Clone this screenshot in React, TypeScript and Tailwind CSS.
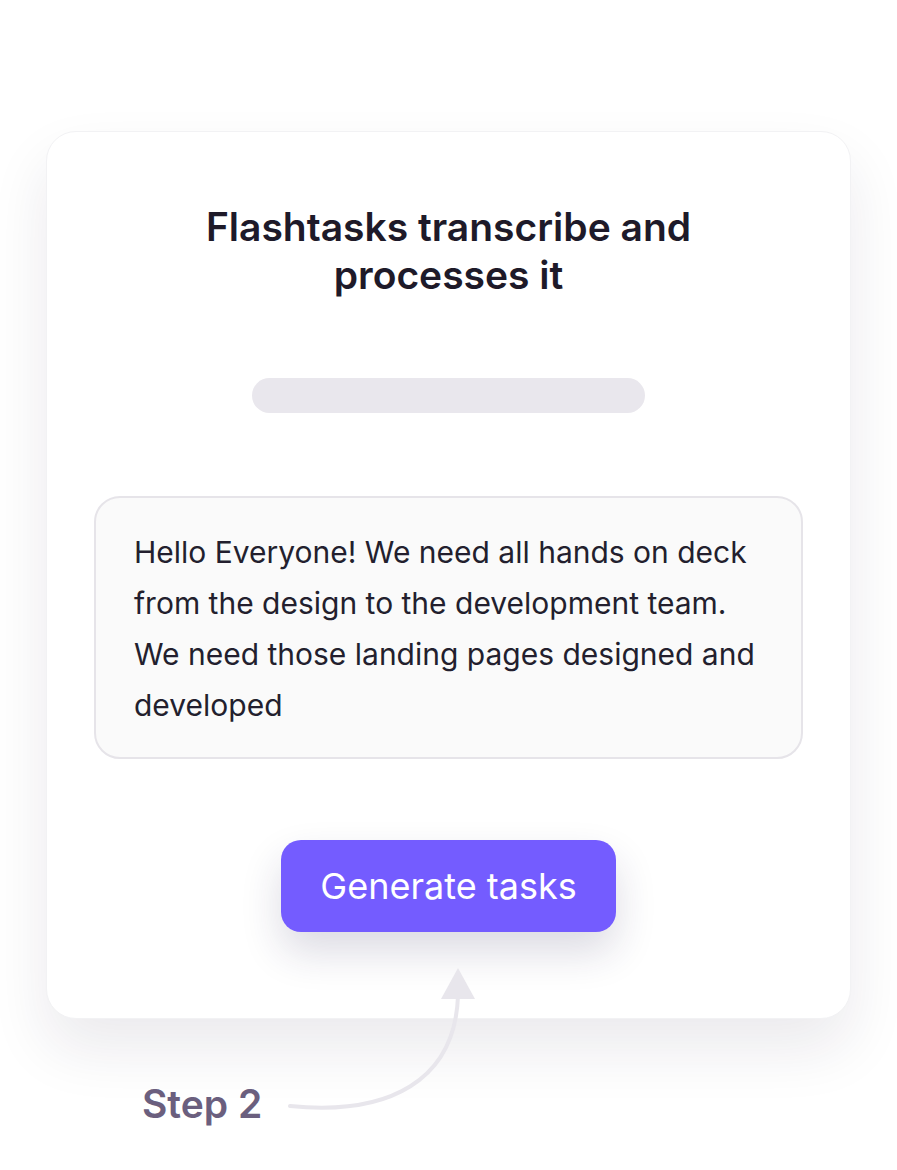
import React from 'react';

export default function App() {
  return (
    <div className="relative min-h-[1170px] w-[897px] bg-white font-['Inter',sans-serif] overflow-hidden">
      <div className="pt-[131px] pl-[46px]">
        {/* Card */}
        <div className="w-[805px] rounded-[30px] border border-[#f2f2f4] bg-white shadow-[0_30px_60px_rgba(30,20,50,0.09)] flex flex-col items-center pt-[71px] pb-[86px] px-[47px]">
          <h1 className="text-center text-[39px] leading-[48px] font-semibold text-[#1e1a29]">
            Flashtasks transcribe and
            <br />
            processes it
          </h1>

          <div className="mt-[79px] h-[35px] w-[393px] rounded-full bg-[#e9e7ed]" />

          <div className="mt-[83px] w-full rounded-[26px] border-2 border-[#e6e4e9] bg-[#fafafa] pl-[38px] pr-[30px] pt-[29px] pb-[26px]">
            <p className="text-[30px] leading-[51px] text-[#231f2e]">
              Hello Everyone! We need all hands on deck from the design to the development team. We need those landing pages designed and developed
            </p>
          </div>

          <button className="mt-[81px] h-[92px] w-[335px] rounded-[20px] bg-[#745cff] text-white text-[36px] shadow-[0_20px_40px_rgba(40,30,80,0.16)]">
            Generate tasks
          </button>
        </div>
      </div>

      {/* Step annotation */}
      <div className="mt-[63px] pl-[142px]">
        <span className="text-[39px] leading-[44px] font-semibold text-[#6b5f7e]">Step 2</span>
      </div>
      <svg className="absolute left-0 top-0" width="897" height="1170" viewBox="0 0 897 1170" fill="none">
        <path d="M290 1106 C 390 1116, 455 1080, 458 996" stroke="#e8e6ec" strokeWidth="4" strokeLinecap="round" />
        <path d="M441 999 L458 968 L475 999 Z" fill="#e8e6ec" />
      </svg>
    </div>
  );
}
